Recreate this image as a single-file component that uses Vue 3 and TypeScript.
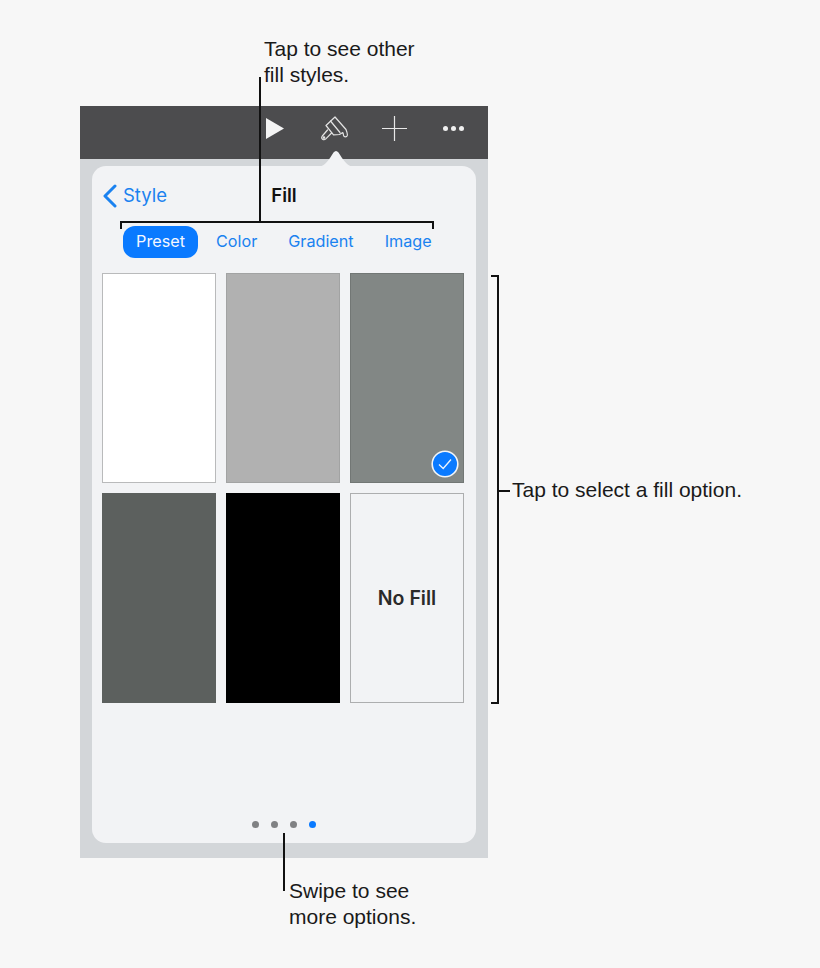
<script setup lang="ts">
interface Tile {
    id: string;
    color: string;
    border: string;
    checked?: boolean;
    label?: string;
}

const tabs = ['Preset', 'Color', 'Gradient', 'Image'];

const tiles: Tile[] = [
    { id: 'white', color: '#ffffff', border: '#b9babb' },
    { id: 'light', color: '#b1b1b1', border: '#a2a3a3' },
    { id: 'mid', color: '#828785', border: '#727775', checked: true },
    { id: 'dark', color: '#5c605e', border: '#5c605e' },
    { id: 'black', color: '#000000', border: '#000000' },
    { id: 'none', color: '#f2f3f5', border: '#adaeaf', label: 'No Fill' }
];

const dots = [false, false, false, true];
</script>

<template>
    <div class="page">
        <div class="device">
            <div class="toolbar">
                <svg class="tool tool-play" viewBox="0 0 18 21" fill="#f4f4f4">
                    <path d="M0 0L18 10.5L0 21z" />
                </svg>
                <svg class="tool tool-brush" viewBox="0 0 27 27" fill="none" stroke="#e4e4e4" stroke-width="1.2" stroke-linejoin="round" stroke-linecap="round">
                    <path d="M14 2L25 14.5C26 17 26.6 19 26.3 20.4C25.8 22.4 23 22.4 22.5 20.4C22.3 19.5 22.6 18.6 21.8 17.6L18.5 19.5L12.5 19.8L5 10.5z" />
                    <path d="M9.5 6L19 17.5" />
                    <path d="M6.5 15L1.3 21C0.3 22.3 0.6 23.6 1.6 24.3C2.6 25 3.8 24.8 4.8 23.8L10.6 18" />
                    <circle cx="3" cy="22.6" r="0.7" />
                </svg>
                <svg class="tool tool-plus" viewBox="0 0 25 25" stroke="#e8e8e8" stroke-width="1.2">
                    <path d="M12.5 0V25M0 12.5H25" />
                </svg>
                <div class="more">
                    <span></span><span></span><span></span>
                </div>
            </div>

            <div class="popover-area">
                <svg class="arrow" viewBox="0 0 40 17" fill="#f2f3f5">
                    <path d="M0 17C8 17 11 12 14 8L17.5 2.5Q20 -0.5 22.5 2.5L26 8C29 12 32 17 40 17z" />
                </svg>
                <div class="panel">
                    <div class="nav">
                        <div class="back">
                            <svg class="chevron" viewBox="0 0 15 24" fill="none" stroke="#1a82f0" stroke-width="3" stroke-linecap="round" stroke-linejoin="round">
                                <path d="M13 2L3 12L13 22" />
                            </svg>
                            <span>Style</span>
                        </div>
                        <div class="title">Fill</div>
                    </div>

                    <div class="tabs">
                        <span v-for="(tab, i) in tabs" :key="tab" class="tab" :class="{ 'tab-active': i === 0 }">{{ tab }}</span>
                    </div>

                    <div class="grid">
                        <div
                            v-for="tile in tiles"
                            :key="tile.id"
                            class="tile"
                            :style="{ backgroundColor: tile.color, borderColor: tile.border }"
                        >
                            <span v-if="tile.label" class="tile-label">{{ tile.label }}</span>
                            <svg v-if="tile.checked" class="check" viewBox="0 0 28 28">
                                <circle cx="14" cy="14" r="12.8" fill="#0a7aff" stroke="#f2f5f8" stroke-width="1.6" />
                                <path d="M8 14.5L12.2 18.5L20 9.5" fill="none" stroke="#eef4fb" stroke-width="1.3" />
                            </svg>
                        </div>
                    </div>

                    <div class="dots">
                        <span v-for="(on, i) in dots" :key="i" class="dot" :class="{ 'dot-on': on }"></span>
                    </div>
                </div>
            </div>
        </div>

        <!-- callouts -->
        <div class="note note-top">Tap to see other<br />fill styles.</div>
        <div class="line line-top"></div>
        <div class="bracket-h"></div>

        <div class="bracket-v"></div>
        <div class="tick"></div>
        <div class="note note-right">Tap to select a fill option.</div>

        <div class="line line-bottom"></div>
        <div class="note note-bottom">Swipe to see<br />more options.</div>
    </div>
</template>

<style>
html,
body {
    margin: 0;
    background: #f7f7f7;
}
</style>

<style scoped>
.page {
    position: relative;
    width: 820px;
    height: 968px;
    padding: 106px 0 0 80px;
    box-sizing: border-box;
    background: #f7f7f7;
    overflow: hidden;
    font-family: Inter, "Liberation Sans", sans-serif;
}

.device {
    width: 408px;
    height: 752px;
    display: flex;
    flex-direction: column;
    background: #d3d6d9;
}

/* 顶部工具栏 */
.toolbar {
    height: 53px;
    box-sizing: border-box;
    padding-bottom: 8px;
    flex-shrink: 0;
    display: flex;
    align-items: center;
    background: #4c4c4e;
}

.tool {
    flex-shrink: 0;
    display: block;
}

.tool-play {
    width: 18px;
    height: 21px;
    margin-left: 186px;
}

.tool-brush {
    width: 27px;
    height: 27px;
    margin-left: 37px;
}

.tool-plus {
    width: 25px;
    height: 25px;
    margin-left: 34px;
}

.more {
    display: flex;
    gap: 3px;
    margin-left: 36px;
}

.more span {
    width: 5px;
    height: 5px;
    border-radius: 50%;
    background: #f0f0f0;
}

.popover-area {
    position: relative;
    flex: 1;
    padding: 7px 12px 15px;
    display: flex;
}

.arrow {
    position: absolute;
    left: 236px;
    top: -9px;
    width: 40px;
    height: 17px;
}

.panel {
    position: relative;
    flex: 1;
    display: flex;
    flex-direction: column;
    padding: 0 10px;
    border-radius: 14px;
    background: #f2f3f5;
}

.nav {
    position: relative;
    height: 60px;
    flex-shrink: 0;
    display: flex;
    align-items: center;
    justify-content: center;
}

.back {
    position: absolute;
    left: 0;
    top: 16px;
    display: flex;
    align-items: center;
    gap: 6px;
    color: #1a82f0;
    font-size: 18.5px;
    line-height: 27px;
}

.chevron {
    width: 15px;
    height: 24px;
}

.title {
    padding-bottom: 2px;
    font-size: 18.5px;
    font-weight: 600;
    color: #111;
}

.tabs {
    height: 32px;
    flex-shrink: 0;
    display: flex;
    align-items: flex-start;
    margin-left: 21px;
    font-size: 16.2px;
    color: #1a82f0;
}

.tab {
    line-height: 31px;
    white-space: nowrap;
    margin-right: 31px;
}

.tab-active {
    width: 75px;
    height: 32px;
    margin-right: 18px;
    text-align: center;
    border-radius: 12px;
    background: #0a7aff;
    color: #f4f8ff;
}

.grid {
    display: grid;
    grid-template-columns: repeat(3, 114px);
    grid-template-rows: repeat(2, 210px);
    column-gap: 10px;
    row-gap: 10px;
    margin-top: 15px;
}

.tile {
    position: relative;
    box-sizing: border-box;
    border: 1px solid;
    display: flex;
    align-items: center;
    justify-content: center;
}

.tile-label {
    font-size: 19.5px;
    font-weight: 600;
    color: #2a2a2a;
}

.check {
    position: absolute;
    right: 4px;
    bottom: 4px;
    width: 28px;
    height: 28px;
}

.dots {
    margin-top: auto;
    margin-bottom: 15px;
    display: flex;
    justify-content: center;
    gap: 12px;
}

.dot {
    width: 7px;
    height: 7px;
    border-radius: 50%;
    background: #808183;
}

.dot-on {
    background: #0a7aff;
}

/* 标注 */
.note {
    position: absolute;
    font-family: "Liberation Sans", Arial, sans-serif;
    font-size: 21px;
    line-height: 26px;
    color: #1a1a1a;
    white-space: nowrap;
}

.note-top {
    left: 264px;
    top: 36px;
}

.note-right {
    left: 512px;
    top: 477px;
}

.note-bottom {
    left: 289px;
    top: 878px;
}

.line {
    position: absolute;
    width: 2px;
    background: #111;
}

.line-top {
    left: 259px;
    top: 77px;
    height: 145px;
}

.line-bottom {
    left: 283px;
    top: 833px;
    height: 58px;
}

.bracket-h {
    position: absolute;
    left: 120px;
    top: 221px;
    width: 314px;
    height: 8px;
    box-sizing: border-box;
    border: 2px solid #111;
    border-bottom: none;
}

.bracket-v {
    position: absolute;
    left: 491px;
    top: 275px;
    width: 8px;
    height: 429px;
    box-sizing: border-box;
    border: 2px solid #111;
    border-left: none;
}

.tick {
    position: absolute;
    left: 498px;
    top: 490px;
    width: 12px;
    height: 2px;
    background: #111;
}
</style>
